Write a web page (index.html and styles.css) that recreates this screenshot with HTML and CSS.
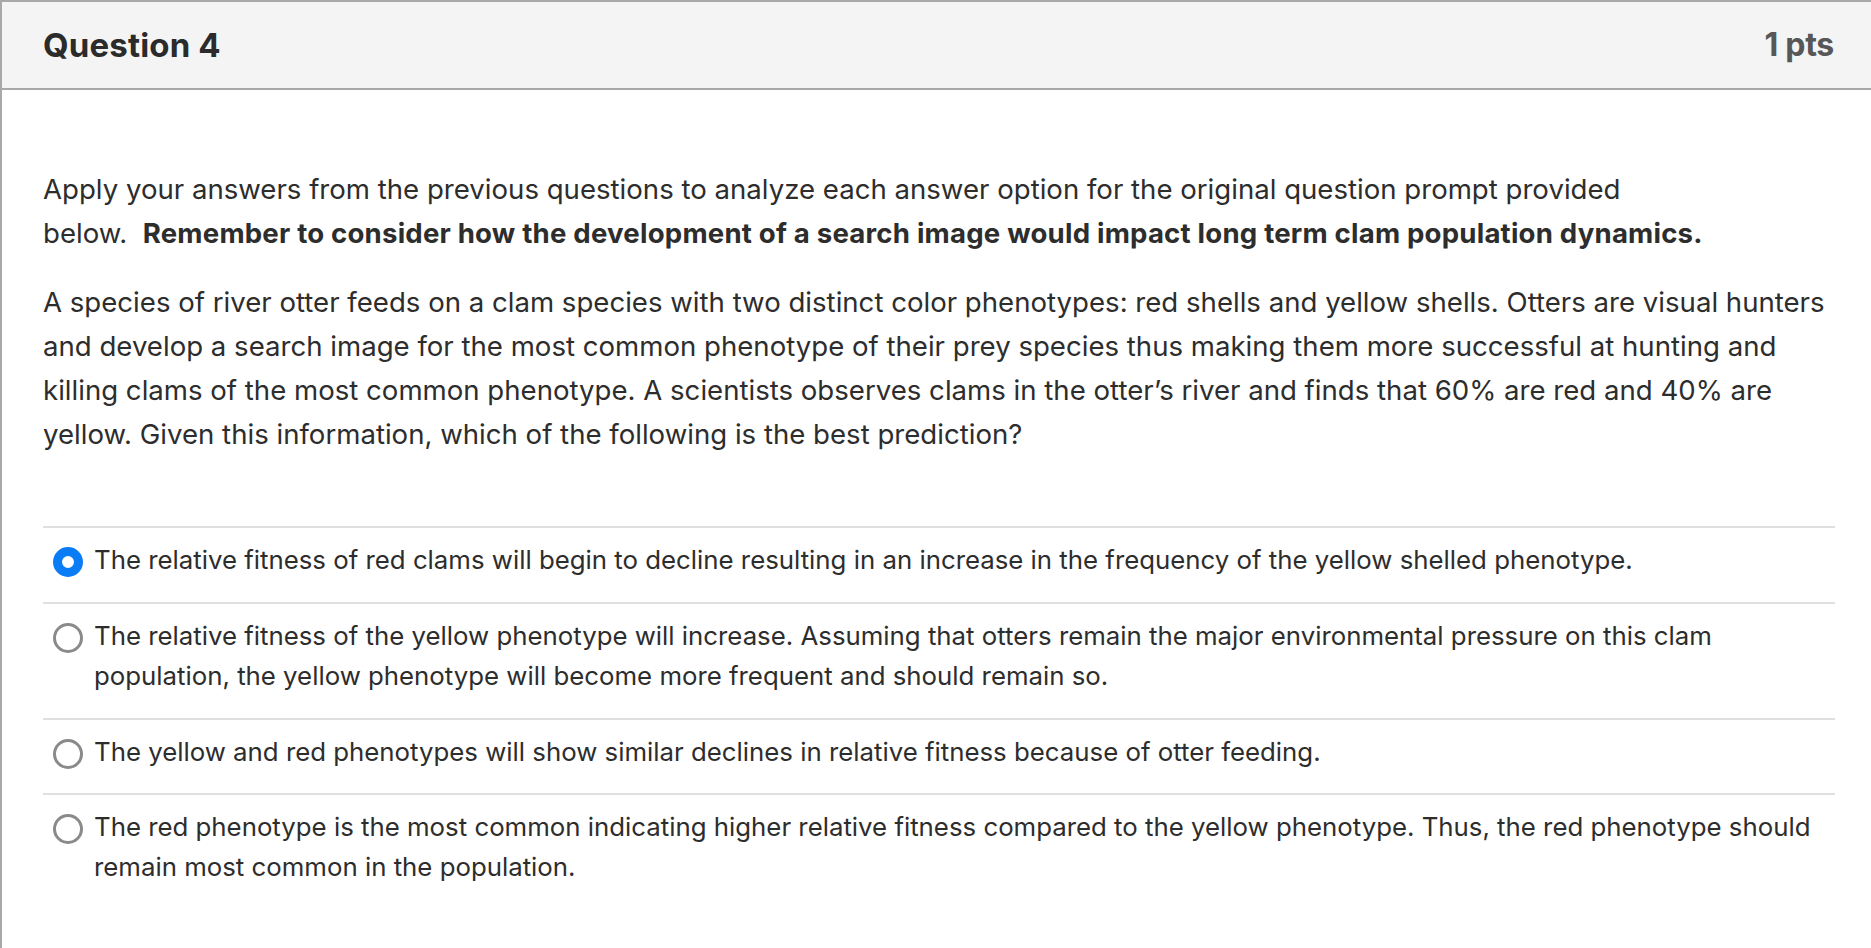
FILE: index.html
```html
<!DOCTYPE html>
<html lang="en">
<head>
<meta charset="utf-8">
<title>Question 4</title>
<link rel="stylesheet" href="styles.css">
</head>
<body>
<div class="question">
  <div class="question-header">
    <span class="question-title">Question 4</span>
    <span class="question-points">1 pts</span>
  </div>
  <div class="question-body">
    <p class="question-text">Apply your answers from the previous questions to analyze each answer option for the original question prompt provided<br>below.&nbsp; <strong>Remember to consider how the development of a search image would impact long term clam population dynamics.</strong></p>
    <p class="question-text">A species of river otter feeds on a clam species with two distinct color phenotypes: red shells and yellow shells. Otters are visual hunters and develop a search image for the most common phenotype of their prey species thus making them more successful at hunting and killing clams of the most common phenotype. A scientists observes clams in the otter’s river and finds that 60% are red and 40% are yellow. Given this information, which of the following is the best prediction?</p>
    <div class="answers">
      <label class="answer">
        <span class="radio radio-checked"></span>
        <span class="answer-text">The relative fitness of red clams will begin to decline resulting in an increase in the frequency of the yellow shelled phenotype.</span>
      </label>
      <label class="answer">
        <span class="radio"></span>
        <span class="answer-text">The relative fitness of the yellow phenotype will increase. Assuming that otters remain the major environmental pressure on this clam population, the yellow phenotype will become more frequent and should remain so.</span>
      </label>
      <label class="answer">
        <span class="radio"></span>
        <span class="answer-text">The yellow and red phenotypes will show similar declines in relative fitness because of otter feeding.</span>
      </label>
      <label class="answer">
        <span class="radio"></span>
        <span class="answer-text">The red phenotype is the most common indicating higher relative fitness compared to the yellow phenotype. Thus, the red phenotype should remain most common in the population.</span>
      </label>
    </div>
  </div>
</div>
</body>
</html>
```
FILE: styles.css
```css
html, body {
  margin: 0;
  padding: 0;
  background: #ffffff;
}

body {
  font-family: Inter, "Noto Sans", sans-serif;
  color: #2d2d2d;
}

.question {
  border-top: 2px solid #a8a8a8;
  border-left: 2px solid #a8a8a8;
  min-height: 946px;
}

.question-header {
  display: flex;
  justify-content: space-between;
  align-items: center;
  height: 85px;
  padding: 0 37px 1px 41px;
  background: #f4f4f4;
  border-bottom: 2px solid #a8a8a8;
}

.question-title {
  font-size: 33px;
  font-weight: 700;
  letter-spacing: 0.15px;
  color: #2b2b2b;
}

.question-points {
  font-size: 32px;
  font-weight: 700;
  letter-spacing: -0.3px;
  color: #575757;
}

.question-body {
  padding: 77px 36px 0 41px;
}

.question-text {
  margin: 0 0 25px;
  font-size: 27.6px;
  line-height: 44px;
}

.question-text strong {
  font-weight: 700;
  letter-spacing: 0.2px;
}

.answers {
  margin-top: 70px;
}

.answer {
  display: flex;
  align-items: flex-start;
  border-top: 2px solid #e0e0e0;
  padding: 12px 0 22px 10px;
  font-size: 25.8px;
  line-height: 40px;
  cursor: pointer;
}

.answer + .answer + .answer {
  padding-bottom: 21px;
}

.radio {
  flex: none;
  box-sizing: border-box;
  width: 30px;
  height: 30px;
  margin-top: 7px;
  margin-right: 11px;
  border-radius: 50%;
  border: 3px solid #8a8a8a;
  background: #ffffff;
}

.radio-checked {
  border: 9px solid #0a7cf5;
}

.answer-text {
  flex: 1;
}
```
